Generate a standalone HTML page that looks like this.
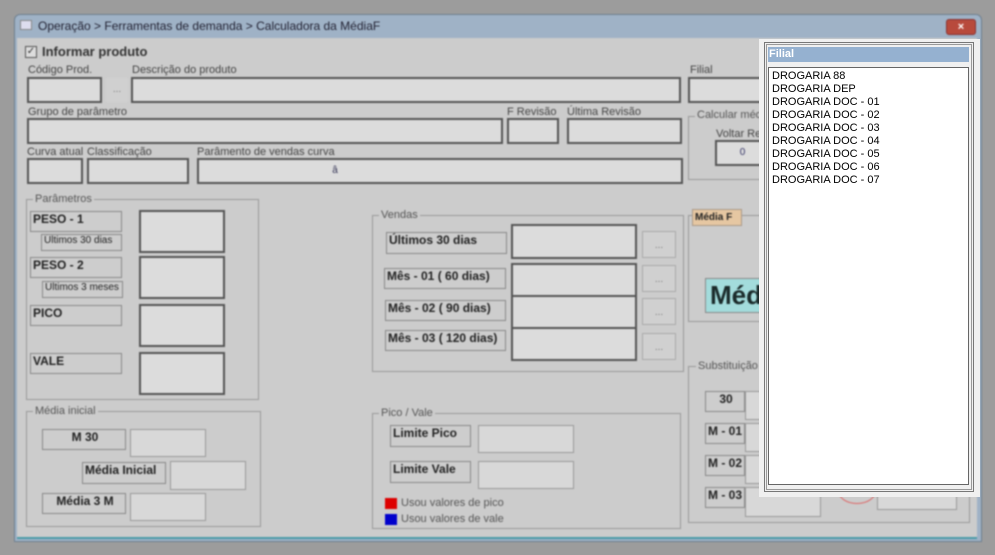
<!DOCTYPE html>
<html><head><meta charset="utf-8"><style>
*{margin:0;padding:0;box-sizing:border-box}
body{width:995px;height:555px;background:#9c9c9c;position:relative;overflow:hidden;font-family:"Liberation Sans",sans-serif;font-size:11px;color:#333}
.a{position:absolute}
#form{position:absolute;left:0;top:0;width:995px;height:555px;filter:blur(0.7px)}
.win{left:14px;top:14px;width:968px;height:528px;background:#9fb2c6;border:1px solid #6f8090;border-radius:6px 6px 0 0}
.cl{left:17px;top:38px;width:960px;height:501px;background:#cccccc;border-bottom:2px solid #4a9aa8}
.t{white-space:nowrap;color:#444}
.f{background:#dcdcdc;border:2px solid #555}
.f1{background:#d8d8d8;border:1px solid #999}
.lb{border:1px solid #888;background:#cdcdcd;font-weight:bold;font-size:12px;color:#222;padding-left:2px;white-space:nowrap;overflow:hidden}
.g{border:1px solid #999}
.gt{background:#ccc;padding:0 2px;color:#555;font-size:11px;white-space:nowrap}
.btn{border:1px solid #aaa;background:#d0d0d0;color:#777;text-align:center;font-size:10px;line-height:18px}
.pl{font-size:11px;line-height:13px;color:#000;white-space:nowrap;font-family:"Liberation Sans",sans-serif}
</style></head><body>
<div id="form">
<div class="a win"></div>
<div class="a" style="left:20px;top:20px;width:12px;height:10px;background:#dde;border:1px solid #888"></div>
<div class="a t" style="left:38px;top:19px;font-size:12px;color:#223">Operação &gt; Ferramentas de demanda &gt; Calculadora da MédiaF</div>
<div class="a" style="left:946px;top:19px;width:30px;height:16px;background:#b84a3c;border:1px solid #833;border-radius:3px;color:#fff;text-align:center;font-size:11px;line-height:14px;font-weight:bold">×</div>
<div class="a cl"></div>

<div class="a" style="left:25px;top:46px;width:12px;height:12px;border:1px solid #555;background:#ddd;font-size:10px;line-height:10px;text-align:center">✓</div>
<div class="a t" style="left:42px;top:44px;font-size:13px;font-weight:bold;color:#333">Informar produto</div>

<div class="a t" style="left:28px;top:64px">Código Prod.</div>
<div class="a t" style="left:132px;top:64px">Descrição do  produto</div>
<div class="a t" style="left:690px;top:64px">Filial</div>
<div class="a f" style="left:27px;top:77px;width:75px;height:26px"></div>
<div class="a btn" style="left:106px;top:78px;width:22px;height:24px;border:none;line-height:24px">...</div>
<div class="a f" style="left:131px;top:77px;width:550px;height:26px"></div>
<div class="a f" style="left:688px;top:77px;width:80px;height:26px"></div>

<div class="a t" style="left:28px;top:106px">Grupo de parâmetro</div>
<div class="a t" style="left:507px;top:106px">F Revisão</div>
<div class="a t" style="left:567px;top:106px">Última Revisão</div>
<div class="a f" style="left:27px;top:118px;width:476px;height:26px"></div>
<div class="a f" style="left:507px;top:118px;width:52px;height:26px"></div>
<div class="a f" style="left:567px;top:118px;width:115px;height:26px"></div>

<div class="a g" style="left:688px;top:116px;width:80px;height:64px"></div>
<div class="a gt" style="left:695px;top:109px">Calcular média</div>
<div class="a t" style="left:716px;top:128px">Voltar Rev</div>
<div class="a f" style="left:715px;top:140px;width:55px;height:26px;text-align:center;line-height:22px;font-size:10px;color:#336">0</div>

<div class="a t" style="left:27px;top:146px">Curva atual</div>
<div class="a t" style="left:87px;top:146px">Classificação</div>
<div class="a t" style="left:197px;top:146px">Parâmento de vendas curva</div>
<div class="a f" style="left:27px;top:158px;width:56px;height:26px"></div>
<div class="a f" style="left:87px;top:158px;width:102px;height:26px"></div>
<div class="a f" style="left:197px;top:158px;width:486px;height:26px;text-align:center;line-height:22px;color:#335;font-size:10px;padding-right:210px">â</div>

<!-- Parametros -->
<div class="a g" style="left:26px;top:199px;width:233px;height:201px"></div>
<div class="a gt" style="left:33px;top:193px">Parâmetros</div>
<div class="a lb" style="left:30px;top:211px;width:92px;height:21px">PESO - 1</div>
<div class="a lb" style="left:41px;top:234px;width:81px;height:17px;font-weight:normal;font-size:10px">Últimos 30 dias</div>
<div class="a f" style="left:139px;top:210px;width:86px;height:43px"></div>
<div class="a lb" style="left:30px;top:257px;width:92px;height:21px">PESO - 2</div>
<div class="a lb" style="left:42px;top:281px;width:81px;height:17px;font-weight:normal;font-size:10px">Últimos 3 meses</div>
<div class="a f" style="left:139px;top:256px;width:86px;height:43px"></div>
<div class="a lb" style="left:30px;top:305px;width:92px;height:21px">PICO</div>
<div class="a f" style="left:139px;top:304px;width:86px;height:43px"></div>
<div class="a lb" style="left:30px;top:353px;width:92px;height:21px">VALE</div>
<div class="a f" style="left:139px;top:352px;width:86px;height:43px"></div>

<!-- Media inicial -->
<div class="a g" style="left:26px;top:411px;width:235px;height:116px"></div>
<div class="a gt" style="left:33px;top:405px">Média inicial</div>
<div class="a lb" style="left:42px;top:429px;width:84px;height:21px;text-align:center">M 30</div>
<div class="a f1" style="left:130px;top:429px;width:76px;height:28px"></div>
<div class="a lb" style="left:82px;top:462px;width:84px;height:22px">Média Inicial</div>
<div class="a f1" style="left:170px;top:461px;width:76px;height:29px"></div>
<div class="a lb" style="left:42px;top:493px;width:84px;height:21px;text-align:center">Média 3 M</div>
<div class="a f1" style="left:130px;top:493px;width:76px;height:28px"></div>

<!-- Vendas -->
<div class="a g" style="left:372px;top:215px;width:312px;height:157px"></div>
<div class="a gt" style="left:379px;top:209px">Vendas</div>
<div class="a lb" style="left:386px;top:232px;width:121px;height:22px">Últimos 30 dias</div>
<div class="a f" style="left:511px;top:224px;width:126px;height:35px"></div>
<div class="a lb" style="left:384px;top:268px;width:122px;height:21px">Mês - 01 ( 60 dias)</div>
<div class="a f" style="left:511px;top:263px;width:126px;height:34px"></div>
<div class="a lb" style="left:385px;top:300px;width:121px;height:21px">Mês - 02 ( 90 dias)</div>
<div class="a f" style="left:511px;top:295px;width:126px;height:34px"></div>
<div class="a lb" style="left:385px;top:330px;width:121px;height:21px">Mês - 03 ( 120 dias)</div>
<div class="a f" style="left:511px;top:327px;width:126px;height:34px"></div>
<div class="a btn" style="left:642px;top:231px;width:34px;height:27px;line-height:27px">...</div>
<div class="a btn" style="left:642px;top:265px;width:34px;height:27px;line-height:27px">...</div>
<div class="a btn" style="left:642px;top:298px;width:34px;height:27px;line-height:27px">...</div>
<div class="a btn" style="left:642px;top:333px;width:34px;height:27px;line-height:27px">...</div>

<!-- Pico / Vale -->
<div class="a g" style="left:372px;top:413px;width:309px;height:116px"></div>
<div class="a gt" style="left:379px;top:407px">Pico / Vale</div>
<div class="a lb" style="left:390px;top:425px;width:81px;height:22px">Limite Pico</div>
<div class="a f1" style="left:478px;top:425px;width:96px;height:28px"></div>
<div class="a lb" style="left:390px;top:461px;width:81px;height:22px">Limite Vale</div>
<div class="a f1" style="left:478px;top:461px;width:96px;height:28px"></div>
<div class="a" style="left:385px;top:498px;width:12px;height:11px;background:#d00"></div>
<div class="a t" style="left:401px;top:497px;font-size:11px;color:#555">Usou valores de pico</div>
<div class="a" style="left:385px;top:514px;width:12px;height:11px;background:#00c"></div>
<div class="a t" style="left:401px;top:513px;font-size:11px;color:#555">Usou valores de vale</div>

<!-- Media F -->
<div class="a g" style="left:688px;top:215px;width:80px;height:107px"></div>
<div class="a" style="left:692px;top:209px;width:50px;height:17px;background:#e6c7a2;border:1px solid #a98;font-size:10px;font-weight:bold;line-height:15px;padding-left:2px;color:#222">Média F</div>
<div class="a" style="left:705px;top:278px;width:60px;height:35px;background:#a3dcdc;border:1px solid #888;font-size:26px;font-weight:bold;color:#1a2a2a;line-height:32px;padding-left:4px;overflow:hidden;white-space:nowrap">Méd</div>

<!-- Substituicao -->
<div class="a g" style="left:688px;top:366px;width:282px;height:157px"></div>
<div class="a gt" style="left:696px;top:360px">Substituição</div>
<div class="a lb" style="left:705px;top:391px;width:40px;height:21px;text-align:center">30</div>
<div class="a f1" style="left:745px;top:391px;width:30px;height:29px"></div>
<div class="a lb" style="left:705px;top:423px;width:40px;height:21px">M - 01</div>
<div class="a f1" style="left:745px;top:423px;width:30px;height:29px"></div>
<div class="a lb" style="left:705px;top:455px;width:40px;height:21px">M - 02</div>
<div class="a f1" style="left:745px;top:455px;width:30px;height:29px"></div>
<div class="a lb" style="left:705px;top:487px;width:40px;height:21px">M - 03</div>
<div class="a f1" style="left:745px;top:487px;width:76px;height:30px"></div>
<div class="a" style="left:838px;top:478px;width:38px;height:26px;border:1px solid #d66;border-radius:50%"></div>
<div class="a f1" style="left:877px;top:490px;width:80px;height:20px"></div>
</div>

<!-- popup -->
<div class="a" style="left:759px;top:39px;width:221px;height:458px;background:#f0f0f0"></div>
<div class="a" style="left:764px;top:42px;width:210px;height:450px;border:1px solid #777;background:#f0f0f0"></div>
<div class="a" style="left:766px;top:44px;width:206px;height:446px;border:1px solid #999"></div>
<div class="a" style="left:768px;top:47px;width:201px;height:15px;background:#95b1d0;color:#fff;font-weight:bold;font-size:11px;line-height:15px;padding-left:1px">Filial</div>
<div class="a" style="left:768px;top:67px;width:201px;height:418px;background:#fff;border:1px solid #666;padding:2px 0 0 3px">
<div class="pl">DROGARIA 88</div>
<div class="pl">DROGARIA DEP</div>
<div class="pl">DROGARIA DOC - 01</div>
<div class="pl">DROGARIA DOC - 02</div>
<div class="pl">DROGARIA DOC - 03</div>
<div class="pl">DROGARIA DOC - 04</div>
<div class="pl">DROGARIA DOC - 05</div>
<div class="pl">DROGARIA DOC - 06</div>
<div class="pl">DROGARIA DOC - 07</div>
</div>
</body></html>
